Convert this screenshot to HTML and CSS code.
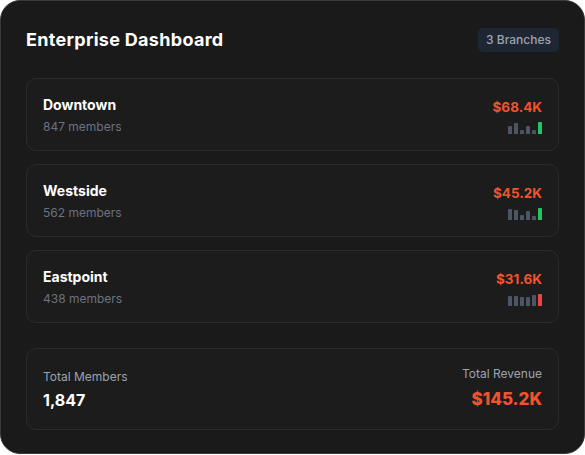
FILE: index.html
```html
<!DOCTYPE html>
<html>
<head>
<meta charset="utf-8">
<link rel="stylesheet" href="styles.css">
</head>
<body>
<div class="panel">
  <div class="header">
    <h1 class="title">Enterprise Dashboard</h1>
    <span class="badge">3 Branches</span>
  </div>
  <div class="list">
    <div class="branch">
      <div class="info">
        <div class="name">Downtown</div>
        <div class="members">847 members</div>
      </div>
      <div class="stats">
        <div class="revenue">$68.4K</div>
        <div class="bars">
          <span class="bar" style="height:8px"></span>
          <span class="bar" style="height:11px"></span>
          <span class="bar" style="height:4px"></span>
          <span class="bar" style="height:8px"></span>
          <span class="bar" style="height:4px"></span>
          <span class="bar up" style="height:12px"></span>
        </div>
      </div>
    </div>
    <div class="branch">
      <div class="info">
        <div class="name">Westside</div>
        <div class="members">562 members</div>
      </div>
      <div class="stats">
        <div class="revenue">$45.2K</div>
        <div class="bars">
          <span class="bar" style="height:11px"></span>
          <span class="bar" style="height:10px"></span>
          <span class="bar" style="height:5px"></span>
          <span class="bar" style="height:9px"></span>
          <span class="bar" style="height:4px"></span>
          <span class="bar up" style="height:12px"></span>
        </div>
      </div>
    </div>
    <div class="branch">
      <div class="info">
        <div class="name">Eastpoint</div>
        <div class="members">438 members</div>
      </div>
      <div class="stats">
        <div class="revenue">$31.6K</div>
        <div class="bars">
          <span class="bar" style="height:10px"></span>
          <span class="bar" style="height:10px"></span>
          <span class="bar" style="height:9px"></span>
          <span class="bar" style="height:9px"></span>
          <span class="bar" style="height:11px"></span>
          <span class="bar down" style="height:12px"></span>
        </div>
      </div>
    </div>
  </div>
  <div class="summary">
    <div class="sum-left">
      <div class="sum-label">Total Members</div>
      <div class="sum-value">1,847</div>
    </div>
    <div class="sum-right">
      <div class="sum-label">Total Revenue</div>
      <div class="sum-revenue">$145.2K</div>
    </div>
  </div>
</div>
</body>
</html>
```
FILE: styles.css
```css
* { box-sizing: border-box; }
html, body { margin: 0; padding: 0; background: #ffffff; }
body { font-family: Inter, "Liberation Sans", sans-serif; }
.panel {
  width: 585px;
  height: 454px;
  background: #1a1a1a;
  border: 1px solid #3a3a3a;
  border-radius: 20px;
  padding: 27px 25px 0 25px;
}
.header {
  display: flex;
  justify-content: space-between;
  align-items: center;
  height: 24px;
}
.title {
  margin: 0;
  font-size: 18px;
  font-weight: 700;
  color: #ffffff;
  letter-spacing: 0.3px;
  position: relative;
  top: -1px;
}
.badge {
  background: #1e2633;
  color: #9ca3af;
  font-size: 12px;
  font-weight: 500;
  padding: 0 8px;
  height: 24px;
  line-height: 24px;
  border-radius: 5px;
}
.list {
  margin-top: 26px;
  display: flex;
  flex-direction: column;
  gap: 13px;
}
.branch {
  height: 73px;
  border: 1px solid #2b2b2b;
  border-radius: 10px;
  background: #1c1c1c;
  display: flex;
  justify-content: space-between;
  align-items: center;
  padding: 2px 16px 0 16px;
}
.name {
  color: #ffffff;
  font-size: 14px;
  font-weight: 700;
  line-height: 18px;
}
.members {
  margin-top: 5px;
  color: #6b7280;
  font-size: 12px;
  line-height: 16px;
}
.stats {
  display: flex;
  flex-direction: column;
  align-items: flex-end;
}
.revenue {
  color: #f2522e;
  font-size: 13.5px;
  font-weight: 700;
  line-height: 18px;
}
.bars {
  margin-top: 6px;
  display: flex;
  align-items: flex-end;
  gap: 2px;
  height: 12px;
}
.bar {
  display: block;
  width: 4px;
  background: #4b5563;
  border-radius: 1px 1px 0 0;
}
.bar.up { background: #22c55e; }
.bar.down { background: #ef4444; }
.summary {
  margin-top: 25px;
  height: 82px;
  border: 1px solid #2b2b2b;
  border-radius: 10px;
  background: #1c1c1c;
  display: flex;
  justify-content: space-between;
  align-items: center;
  padding: 0 16px;
}
.sum-left, .sum-right { display: flex; flex-direction: column; }
.sum-right { align-items: flex-end; padding-bottom: 3px; }
.sum-label {
  color: #9ca3af;
  font-size: 12px;
  line-height: 16px;
}
.sum-value {
  margin-top: 5px;
  color: #ffffff;
  font-size: 16px;
  font-weight: 700;
  line-height: 20px;
}
.sum-revenue {
  margin-top: 6px;
  color: #f2522e;
  font-size: 17px;
  font-weight: 800;
  line-height: 22px;
}
```
